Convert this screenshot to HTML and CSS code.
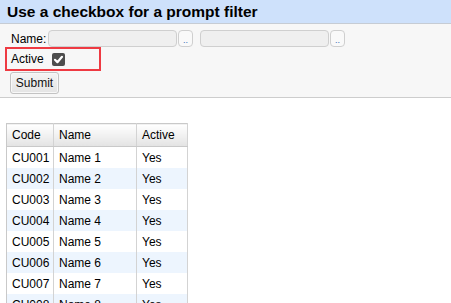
FILE: index.html
```html
<!DOCTYPE html>
<html>
<head>
<meta charset="utf-8">
<link rel="stylesheet" href="styles.css">
</head>
<body>
<div class="titlebar">Use a checkbox for a prompt filter</div>
<div class="panel">
  <div class="row name-row">
    <span class="label">Name:</span>
    <span class="field"></span><span class="pick">..</span>
    <span class="field second"></span><span class="pick">..</span>
  </div>
  <div class="active-box">
    <span class="label">Active</span>
    <span class="check"><svg width="13" height="13" viewBox="0 0 13 13"><path d="M3 6.8 L5.4 9.2 L10 3.8" fill="none" stroke="#fff" stroke-width="2.2" stroke-linecap="round" stroke-linejoin="round"/></svg></span>
  </div>
  <div class="row submit-row"><span class="btn">Submit</span></div>
</div>
<table class="grid">
  <thead>
    <tr><th class="c1">Code</th><th class="c2">Name</th><th class="c3">Active</th></tr>
  </thead>
  <tbody>
    <tr><td>CU001</td><td>Name 1</td><td>Yes</td></tr>
    <tr><td>CU002</td><td>Name 2</td><td>Yes</td></tr>
    <tr><td>CU003</td><td>Name 3</td><td>Yes</td></tr>
    <tr><td>CU004</td><td>Name 4</td><td>Yes</td></tr>
    <tr><td>CU005</td><td>Name 5</td><td>Yes</td></tr>
    <tr><td>CU006</td><td>Name 6</td><td>Yes</td></tr>
    <tr><td>CU007</td><td>Name 7</td><td>Yes</td></tr>
    <tr><td>CU008</td><td>Name 8</td><td>Yes</td></tr>
  </tbody>
</table>
</body>
</html>
```
FILE: styles.css
```css
html, body {
  margin: 0;
  padding: 0;
  background: #fff;
  font-family: "Liberation Sans", Arial, sans-serif;
  font-size: 12px;
  color: #000;
  overflow: hidden;
}
.titlebar {
  height: 23px;
  line-height: 23px;
  background: #cee1fb;
  border-bottom: 1px solid #c6ccd4;
  padding-left: 7px;
  font-weight: bold;
  font-size: 15.5px;
}
.panel {
  background: #f7f7f7;
  border-bottom: 1px solid #cdcdcd;
  padding: 6px 0 1px 0;
  height: 66px;
}
.row {
  display: flex;
  align-items: center;
}
.name-row {
  padding-left: 11px;
  height: 17px;
}
.name-row .label {
  width: 37px;
}
.field {
  width: 127px;
  height: 15px;
  border: 1px solid #cfcfcf;
  border-radius: 4px;
  background: #efefef;
}
.field.second {
  margin-left: 7px;
}
.pick {
  width: 13px;
  height: 15px;
  margin-left: 1px;
  border: 1px solid #cfcfcf;
  border-radius: 4px;
  background: #f9f9f9;
  font-size: 9px;
  line-height: 19px;
  text-align: center;
  color: #3b6fb6;
  overflow: hidden;
}
.active-box {
  margin: 0 0 0 5px;
  width: 88px;
  height: 20px;
  border: 2px solid #ee3a42;
  display: flex;
  align-items: center;
  padding-left: 4px;
  box-sizing: content-box;
}
.active-box .label {
  width: 41px;
}
.check {
  width: 13px;
  height: 13px;
  background: #4d4d4d;
  border-radius: 2px;
  display: flex;
}
.submit-row {
  padding-left: 10px;
  margin-top: 1px;
}
.btn {
  width: 47px;
  height: 20px;
  border: 1px solid #c3c3c3;
  border-radius: 3px;
  background: linear-gradient(#f4f4f4, #e4e4e4);
  box-shadow: inset 0 0 0 1px #f8f8f8;
  text-align: center;
  line-height: 20px;
  color: #111;
}
.grid {
  margin: 25px 0 0 6px;
  border-collapse: collapse;
  border: 1px solid #c9c9c9;
  width: 182px;
}
.grid th {
  height: 22px;
  text-align: left;
  font-weight: normal;
  padding: 0 0 0 5px;
  background: linear-gradient(#ffffff, #e3e3e3);
  border-right: 1px solid #d3d3d3;
  border-bottom: 1px solid #c9c9c9;
}
.grid td {
  height: 21px;
  padding: 0 0 0 5px;
  border-right: 1px solid #d3d3d3;
}
.grid tbody tr:nth-child(even) td {
  background: #edf5fe;
}
.c1 { width: 41px; }
.c2 { width: 77px; }
.c3 { width: 45px; }
```
